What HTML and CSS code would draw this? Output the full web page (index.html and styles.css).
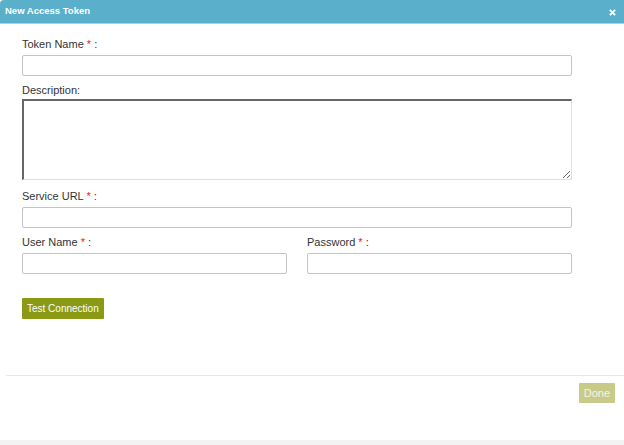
FILE: index.html
```html
<!DOCTYPE html>
<html lang="en">
<head>
    <meta charset="UTF-8">
    <title>New Access Token</title>
    <link rel="stylesheet" href="styles.css">
</head>
<body>
    <div class="dialog">
        <div class="dialog-header">
            <span class="dialog-title">New Access Token</span>
            <span class="close-btn">
                <svg width="7" height="7" viewBox="0 0 8 8"><path d="M1 1 L7 7 M7 1 L1 7" stroke="#fff" stroke-width="2.2"/></svg>
            </span>
        </div>

        <div class="dialog-body">
            <div class="field">
                <label>Token Name <span class="req">*</span> :</label>
                <input type="text" class="text-input">
            </div>
            <div class="field">
                <label>Description:</label>
                <textarea class="text-area"></textarea>
            </div>
            <div class="field">
                <label>Service URL <span class="req">*</span> :</label>
                <input type="text" class="text-input">
            </div>
            <div class="field-row">
                <div class="field">
                    <label>User Name <span class="req">*</span> :</label>
                    <input type="text" class="text-input">
                </div>
                <div class="field">
                    <label>Password <span class="req">*</span> :</label>
                    <input type="password" class="text-input">
                </div>
            </div>
            <button class="btn btn-test">Test Connection</button>
        </div>

        <div class="dialog-footer">
            <button class="btn btn-done">Done</button>
        </div>
        <div class="dialog-bottom"></div>
    </div>
</body>
</html>
```

FILE: styles.css
```css
body {
    margin: 0;
    padding: 0;
    font-family: "Liberation Sans", Arial, sans-serif;
    background-color: #fff;
}

.dialog {
    width: 624px;
    height: 445px;
    display: flex;
    flex-direction: column;
    background-color: #fff;
}

.dialog-header {
    height: 23px;
    background-color: #5aafca;
    border-bottom: 1px solid #a5d6e6;
    border-top-left-radius: 4px;
    display: flex;
    align-items: center;
    justify-content: space-between;
    padding: 0 8px 0 5px;
}

.dialog-title {
    color: #fff;
    font-size: 9.5px;
    font-weight: bold;
    margin-top: -3px;
}

.close-btn {
    display: flex;
    margin-top: 2px;
}

.dialog-body {
    padding: 13px 52px 0 22px;
    flex: 1;
}

.field {
    display: flex;
    flex-direction: column;
    margin-bottom: 7px;
}

.field label {
    font-size: 11px;
    line-height: 14px;
    color: #333;
    margin-bottom: 4px;
}

.req {
    color: #e3211c;
}

.text-input {
    box-sizing: border-box;
    height: 21px;
    border: 1px solid #c4c4c4;
    border-radius: 2px;
    padding: 2px 4px;
    margin: 0;
    font-size: 12px;
}

.text-area {
    box-sizing: border-box;
    height: 81px;
    margin: -2px 0 2px;
    border-style: solid;
    border-width: 2px 1px 1px 2px;
    border-color: #666 #e0e0e0 #e0e0e0 #666;
    padding: 2px;
    font-size: 12px;
}

.field-row {
    display: grid;
    grid-template-columns: 1fr 1fr;
    gap: 20px;
}

.btn {
    border: none;
    border-radius: 1px;
    color: #fff;
    font-family: "Liberation Sans", Arial, sans-serif;
    font-size: 10px;
    height: 21px;
    padding: 0 5px;
    cursor: pointer;
}

.btn-test {
    background-color: #8b9a14;
    margin-top: 17px;
}

.dialog-footer {
    margin-left: 6px;
    border-top: 1px solid #e6e6e6;
    display: flex;
    justify-content: flex-end;
    padding: 7px 9px 0 0;
    height: 57px;
}

.btn-done {
    background-color: #c8cb88;
    color: #f4f4e6;
    font-size: 11px;
    height: 20px;
    padding: 0 5px;
}

.dialog-bottom {
    height: 5px;
    background-color: #f3f3f3;
}
```
